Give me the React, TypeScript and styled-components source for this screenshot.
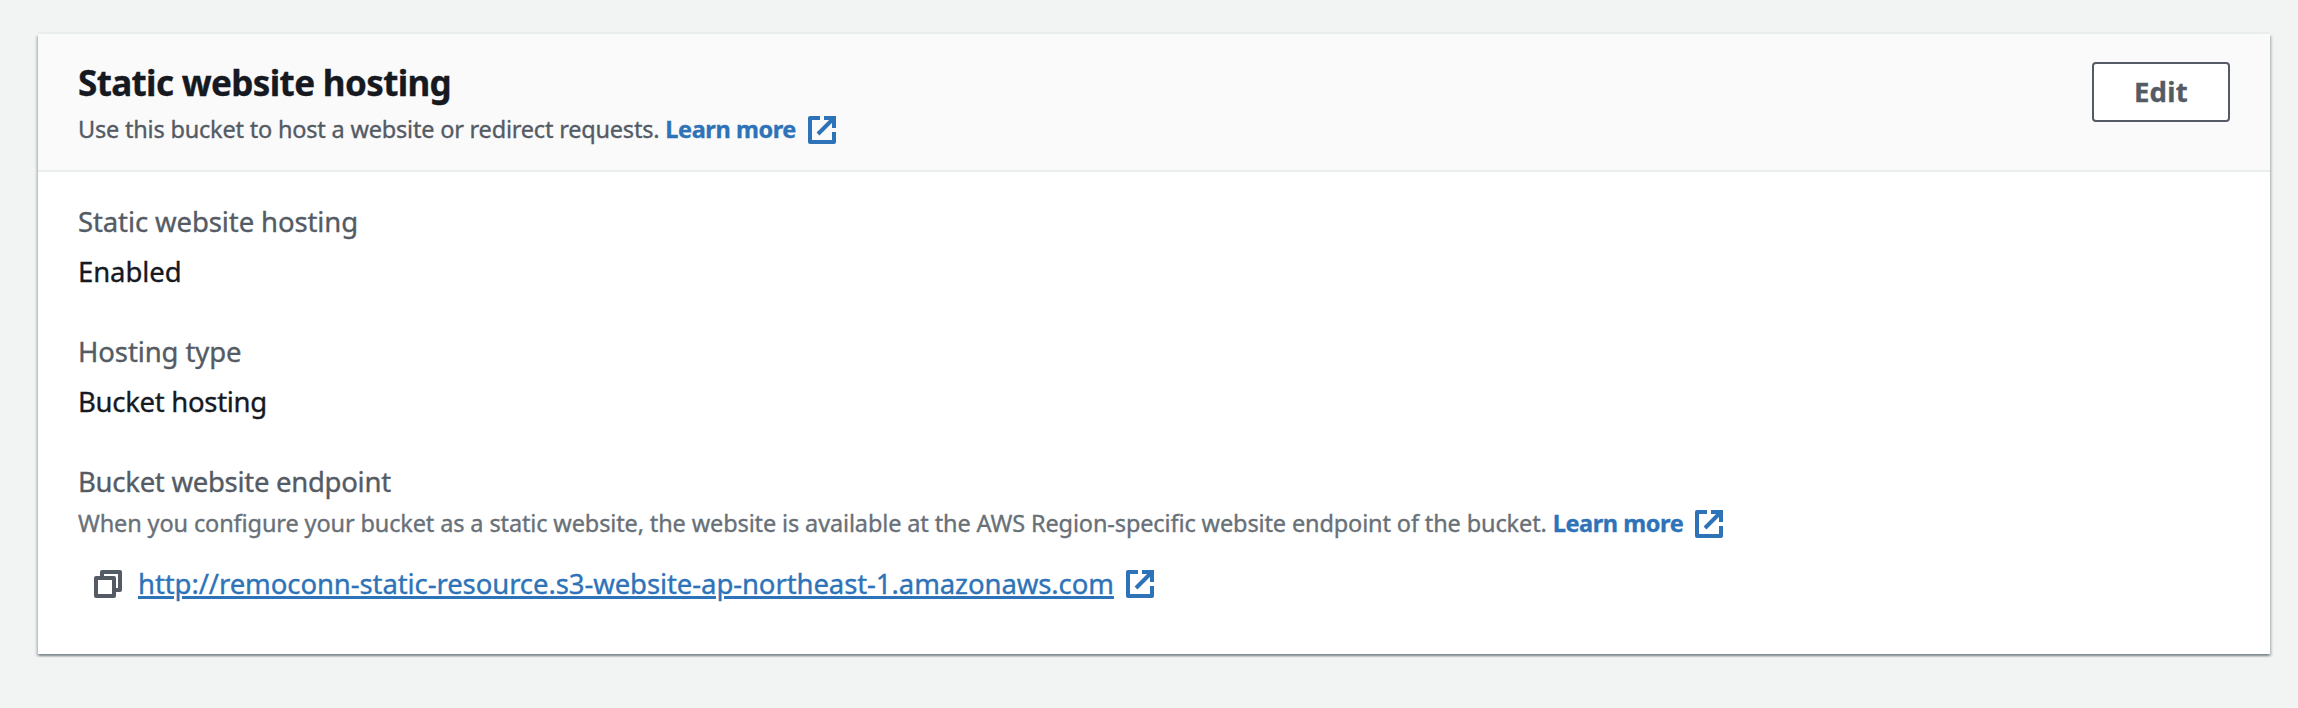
import React from 'react';
import styled, { createGlobalStyle } from 'styled-components';

const GlobalStyle = createGlobalStyle`
  * { box-sizing: border-box; }
  body {
    margin: 0;
    background: #f2f3f3;
    color: #16191f;
    font-family: 'Noto Sans', 'Open Sans', sans-serif;
    font-feature-settings: 'liga' 1;
    font-size: 27.5px;
    line-height: 44px;
    -webkit-text-stroke: 0.35px currentColor;
  }
`;

const Page = styled.main`
  min-height: 708px;
  padding: 34px 28px 54px 38px;
`;

const Card = styled.section`
  background: #fff;
  height: 620px;
  box-shadow: 0 2px 2px 0 rgba(0, 28, 36, 0.3), 2px 2px 2px 0 rgba(0, 28, 36, 0.15),
    -2px 2px 2px 0 rgba(0, 28, 36, 0.15), 0 -2px 0 0 #eaeded;
`;

const Header = styled.header`
  display: flex;
  justify-content: space-between;
  align-items: flex-start;
  height: 138px;
  padding: 27px 40px 0;
  background: #fafafa;
  border-bottom: 2px solid #eaeded;
`;

const Title = styled.h2`
  margin: 0;
  font-size: 35px;
  font-weight: 700;
  line-height: 44px;
  letter-spacing: -0.64px;
`;

const Description = styled.p<{ $muted?: boolean; $tracking: number }>`
  display: flex;
  align-items: center;
  margin: 0;
  color: ${(p) => (p.$muted ? '#687078' : '#545b64')};
  font-size: 23.5px;
  line-height: 36px;
  letter-spacing: ${(p) => p.$tracking}px;
  white-space: nowrap;
`;

const HeaderText = styled.div`
  display: flex;
  flex-direction: column;
  gap: 6px;
`;

const EditButton = styled.button`
  width: 138px;
  height: 60px;
  margin-top: 1px;
  padding: 0 0 1px;
  border: 2px solid #545b64;
  border-radius: 4px;
  background: #fff;
  color: #545b64;
  font: 700 27.5px/44px 'Noto Sans', 'Open Sans', sans-serif;
  letter-spacing: 0.3px;
`;

const LearnMore = styled.a`
  display: inline-flex;
  align-items: center;
  gap: 12px;
  margin-left: 6px;
  color: #2e73b8;
  font-weight: 700;
  letter-spacing: -0.42px;
  text-decoration: none;

  svg {
    margin-top: 2px;
  }
`;

const Body = styled.div`
  display: flex;
  flex-direction: column;
  gap: 36px;
  padding: 28px 40px 0;
`;

const Field = styled.div``;

const Label = styled.div<{ $tracking: number }>`
  color: #545b64;
  letter-spacing: ${(p) => p.$tracking}px;
`;

const Value = styled.div<{ $tracking: number }>`
  margin-top: 6px;
  letter-spacing: ${(p) => p.$tracking}px;
`;

const Hint = styled.div`
  margin-top: 1px;
`;

const Endpoint = styled.div`
  display: flex;
  align-items: center;
  margin-top: 21px;
  padding-left: 16px;
`;

const CopyButton = styled.button`
  display: flex;
  margin: 0 16px 0 0;
  padding: 0;
  border: 0;
  background: none;
  color: #545b64;
`;

const EndpointLink = styled.a`
  display: inline-flex;
  align-items: center;
  gap: 12px;
  color: #2e73b8;
  letter-spacing: -0.09px;
`;

const LinkText = styled.span`
  text-decoration: underline;
  text-decoration-thickness: 2px;
  text-underline-offset: 3px;
`;

const Icon = styled.svg`
  display: block;
  flex: none;
  width: 28px;
  height: 28px;
  fill: none;
  stroke: currentColor;
  stroke-width: 4;
`;

const ExternalIcon = () => (
  <Icon viewBox="0 0 28 28" aria-hidden="true">
    <path d="M12 2H2V26H26V16" strokeLinejoin="round" />
    <path d="M16 2H26V12M26 2L10 18" />
  </Icon>
);

const CopyIcon = () => (
  <Icon viewBox="0 0 28 28" aria-hidden="true" strokeLinejoin="round">
    <path d="M2 8H20V26H2Z" />
    <path d="M8 8V2H26V20H20" />
  </Icon>
);

const LearnMoreLink = () => (
  <LearnMore href="#">
    Learn more
    <ExternalIcon />
  </LearnMore>
);

export default function App() {
  return (
    <>
      <GlobalStyle />
      <Page>
        <Card>
          <Header>
            <HeaderText>
              <Title>Static website hosting</Title>
              <Description $tracking={-0.2}>
                Use this bucket to host a website or redirect requests.
                <LearnMoreLink />
              </Description>
            </HeaderText>
            <EditButton type="button">Edit</EditButton>
          </Header>
          <Body>
            <Field>
              <Label $tracking={-0.11}>Static website hosting</Label>
              <Value $tracking={-0.1}>Enabled</Value>
            </Field>
            <Field>
              <Label $tracking={-0.1}>Hosting type</Label>
              <Value $tracking={-0.3}>Bucket hosting</Value>
            </Field>
            <Field>
              <Label $tracking={-0.28}>Bucket website endpoint</Label>
              <Hint>
                <Description $muted $tracking={-0.128}>
                  When you configure your bucket as a static website, the website is available at the AWS
                  Region-specific website endpoint of the bucket.
                  <LearnMoreLink />
                </Description>
              </Hint>
              <Endpoint>
                <CopyButton type="button" aria-label="Copy endpoint">
                  <CopyIcon />
                </CopyButton>
                <EndpointLink href="#">
                  <LinkText>http://remoconn-static-resource.s3-website-ap-northeast-1.amazonaws.com</LinkText>
                  <ExternalIcon />
                </EndpointLink>
              </Endpoint>
            </Field>
          </Body>
        </Card>
      </Page>
    </>
  );
}
